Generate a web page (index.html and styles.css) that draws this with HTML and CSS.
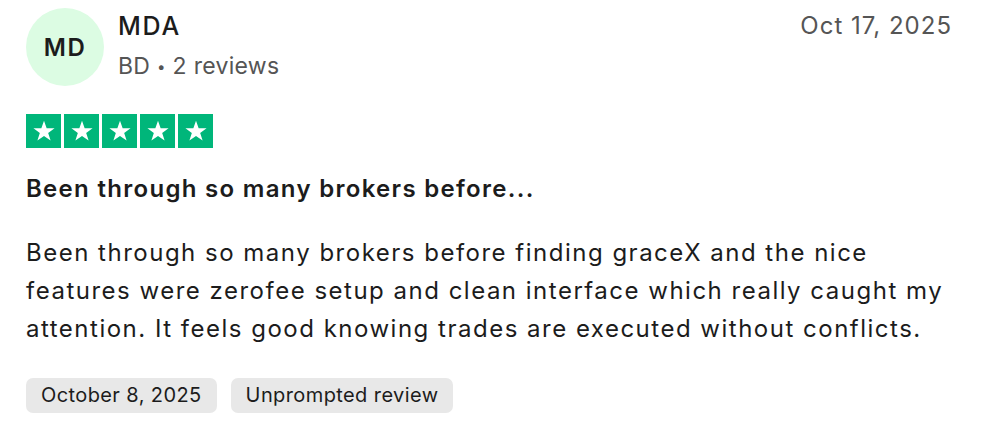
FILE: index.html
```html
<!DOCTYPE html>
<html lang="en">
<head>
    <meta charset="UTF-8">
    <meta name="viewport" content="width=device-width, initial-scale=1.0">
    <title>Review</title>
    <link rel="stylesheet" href="styles.css">
</head>
<body>
    <article class="review">
        <header class="review-head">
            <div class="avatar">MD</div>
            <div class="consumer">
                <div class="name">MDA</div>
                <div class="meta">BD <span class="dot">•</span> 2 reviews</div>
            </div>
            <time class="date">Oct 17, 2025</time>
        </header>

        <div class="stars">
            <span class="star"><svg viewBox="0 0 24 24"><path d="M12 2.6l2.45 6.95h7.3l-5.9 4.3 2.25 6.95L12 16.5l-6.1 4.3 2.25-6.95-5.9-4.3h7.3z"/></svg></span>
            <span class="star"><svg viewBox="0 0 24 24"><path d="M12 2.6l2.45 6.95h7.3l-5.9 4.3 2.25 6.95L12 16.5l-6.1 4.3 2.25-6.95-5.9-4.3h7.3z"/></svg></span>
            <span class="star"><svg viewBox="0 0 24 24"><path d="M12 2.6l2.45 6.95h7.3l-5.9 4.3 2.25 6.95L12 16.5l-6.1 4.3 2.25-6.95-5.9-4.3h7.3z"/></svg></span>
            <span class="star"><svg viewBox="0 0 24 24"><path d="M12 2.6l2.45 6.95h7.3l-5.9 4.3 2.25 6.95L12 16.5l-6.1 4.3 2.25-6.95-5.9-4.3h7.3z"/></svg></span>
            <span class="star"><svg viewBox="0 0 24 24"><path d="M12 2.6l2.45 6.95h7.3l-5.9 4.3 2.25 6.95L12 16.5l-6.1 4.3 2.25-6.95-5.9-4.3h7.3z"/></svg></span>
        </div>

        <h2 class="title">Been through so many brokers before...</h2>

        <p class="text">Been through so many brokers before finding graceX and the nice features were zerofee setup and clean interface which really caught my attention. It feels good knowing trades are executed without conflicts.</p>

        <div class="tags">
            <span class="tag">October 8, 2025</span>
            <span class="tag">Unprompted review</span>
        </div>
    </article>
</body>
</html>
```

FILE: styles.css
```css
body {
    margin: 0;
    background: #fff;
    font-family: Inter, "Noto Sans", sans-serif;
    color: #1c1c1c;
}
.review {
    width: 926px;
    padding: 8px 40px 0 26px;
}
.review-head {
    display: flex;
    align-items: flex-start;
}
.avatar {
    width: 78px;
    height: 78px;
    border-radius: 50%;
    background: #dcfce3;
    display: flex;
    align-items: center;
    justify-content: center;
    font-size: 24px;
    font-weight: 600;
    letter-spacing: 1.5px;
    color: #1c1c1c;
    flex-shrink: 0;
}
.consumer {
    margin-left: 14px;
    flex: 1;
}
.name {
    font-size: 25px;
    font-weight: 500;
    letter-spacing: 1.8px;
    line-height: 34px;
    margin-top: 1px;
}
.meta {
    font-size: 23px;
    color: #555;
    letter-spacing: 0.3px;
    line-height: 30px;
    margin-top: 8px;
}
.dot {
    font-size: 15px;
    vertical-align: 2px;
}
.date {
    font-size: 24px;
    color: #555;
    letter-spacing: 1px;
    line-height: 34px;
    margin-top: 1px;
}
.stars {
    display: flex;
    gap: 3px;
    margin-top: 28px;
}
.star {
    width: 35px;
    height: 34px;
    background: #00b67a;
    display: flex;
    align-items: center;
    justify-content: center;
}
.star svg {
    width: 26px;
    height: 26px;
    fill: #fff;
}
.title {
    font-size: 24px;
    font-weight: 600;
    letter-spacing: 1.3px;
    margin: 26px 0 0;
    line-height: 30px;
}
.text {
    font-size: 24px;
    letter-spacing: 1.5px;
    line-height: 38px;
    margin: 30px 0 0;
}
.tags {
    display: flex;
    gap: 14px;
    margin-top: 30px;
}
.tag {
    background: #e8e8e8;
    border-radius: 7px;
    font-size: 20px;
    letter-spacing: 0.4px;
    line-height: 35px;
    padding: 0 15px;
}
```
